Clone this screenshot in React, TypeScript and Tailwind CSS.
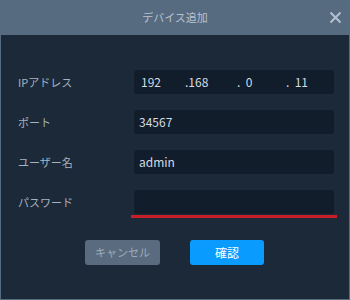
import React from 'react';

const FONT = { fontFamily: '"Noto Sans CJK JP", "Noto Sans", sans-serif' };

const Field: React.FC<{ label: string; children?: React.ReactNode; error?: boolean }> = ({ label, children, error }) => (
  <div className="flex items-start h-[40px]">
    <div className="w-[133px] pl-[17px] h-[24px] flex items-center text-[11px] text-[#a7b2bf]">{label}</div>
    <div className="w-[200px] flex flex-col">
      <div className="h-[24px] rounded-[3px] bg-[#121d2b] flex items-center px-[5px] text-[12px] text-[#d3dbe4]">
        {children}
      </div>
      {error && <div className="h-[3px] mt-[1px] -mx-[3px] bg-[#c81e28]"></div>}
    </div>
  </div>
);

export default function App() {
  return (
    <div className="w-[350px] h-[300px] flex flex-col bg-[#566a80]" style={FONT}>
      <div className="h-[35px] flex items-center justify-center relative">
        <span className="text-[11px] text-[#b6c3d2]">デバイス追加</span>
        <svg className="absolute right-[8px] top-[11px]" width="13" height="13" viewBox="0 0 13 13">
          <path d="M1.5 1.5 L11.5 11.5 M11.5 1.5 L1.5 11.5" stroke="#b4c0ce" strokeWidth="2" />
        </svg>
      </div>
      <div className="flex-1 mx-[1px] mb-[1px] bg-[#1c2939] pt-[35px] flex flex-col">
        <Field label="IPアドレス">
          <div className="flex w-full pl-[2px]">
            <span className="w-[44px]">192</span>
            <span className="w-[52px]">.168</span>
            <span className="w-[49px]">.&nbsp;&nbsp;0</span>
            <span>.&nbsp;&nbsp;11</span>
          </div>
        </Field>
        <Field label="ポート">34567</Field>
        <Field label="ユーザー名">admin</Field>
        <Field label="パスワード" error />
        <div className="flex gap-[30px] pl-[84px] mt-[10px]">
          <button className="w-[75px] h-[25px] rounded-[3px] bg-[#5a6b80] text-[11px] text-[#9eabba]">キャンセル</button>
          <button className="w-[74px] h-[25px] rounded-[3px] bg-[#0a9bff] text-[12px] text-white">確認</button>
        </div>
      </div>
    </div>
  );
}
